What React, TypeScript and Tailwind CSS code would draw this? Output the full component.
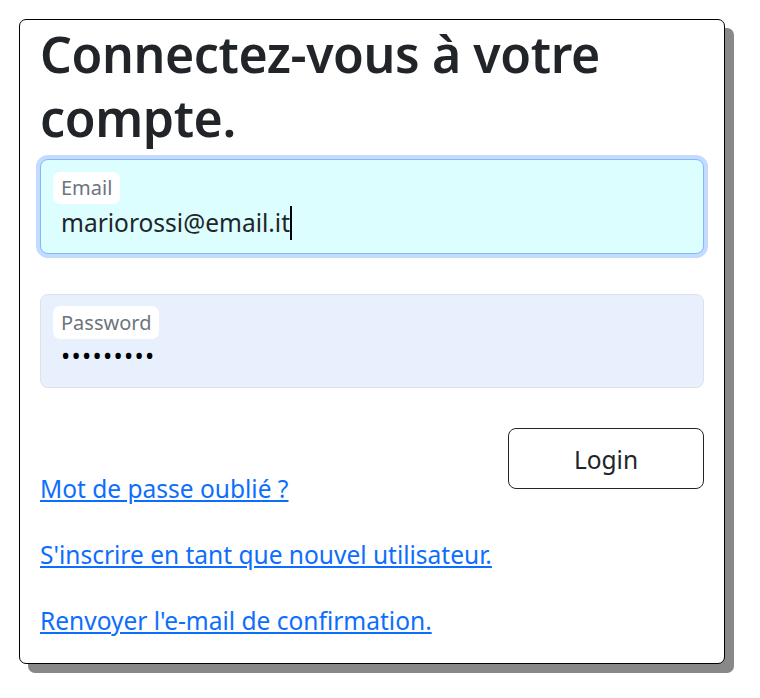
export default function App() {
  return (
    <div className="min-h-screen bg-white pt-[19px] pl-[19px] font-['Noto_Sans',sans-serif] text-[#212529]">
      <div className="w-[706px] h-[645px] border border-black rounded-[7px] bg-white shadow-[9px_9px_0_#888] px-[20px]">
        <h1 className="pt-[2px] text-[50px] leading-[64px] tracking-[-0.4px] font-semibold">Connectez-vous à votre compte.</h1>

        <div className="mt-[9px] h-[95px] rounded-[8px] border border-[#86b7fe] bg-[#dcfefe] ring-[4px] ring-[#c2dbfe] pt-[12px] px-[12px] flex flex-col items-start">
          <span className="bg-white rounded-[7px] px-[8px] text-[20px] leading-[32px] text-[#6c757d]">Email</span>
          <div className="mt-[2px] pl-[8px] text-[24.5px] leading-[32px] flex items-center">
            <span>mariorossi@email.it</span>
            <span className="inline-block w-[2px] h-[34px] bg-black" />
          </div>
        </div>

        <div className="mt-[40px] h-[94px] rounded-[8px] border border-[#dee2e6] bg-[#e8f0fe] pt-[11px] px-[12px] flex flex-col items-start">
          <span className="bg-white rounded-[7px] px-[8px] text-[20px] leading-[33px] text-[#6c757d]">Password</span>
          <div className="mt-[1px] pl-[8px] text-[24.5px] leading-[32px] tracking-[1.3px] text-black">•••••••••</div>
        </div>

        <div className="mt-[40px] flex justify-between items-start">
          <div className="pt-[45px] flex flex-col gap-[34px] text-[24.5px] leading-[32px]">
            <a href="#" className="text-[#0d6efd] underline self-start">Mot de passe oublié ?</a>
            <a href="#" className="text-[#0d6efd] underline self-start">S'inscrire en tant que nouvel utilisateur.</a>
            <a href="#" className="text-[#0d6efd] underline self-start">Renvoyer l'e-mail de confirmation.</a>
          </div>
          <button className="w-[196px] h-[61px] pt-[3px] rounded-[8px] border border-[#212529] bg-white text-[24.5px]">Login</button>
        </div>
      </div>
    </div>
  );
}
